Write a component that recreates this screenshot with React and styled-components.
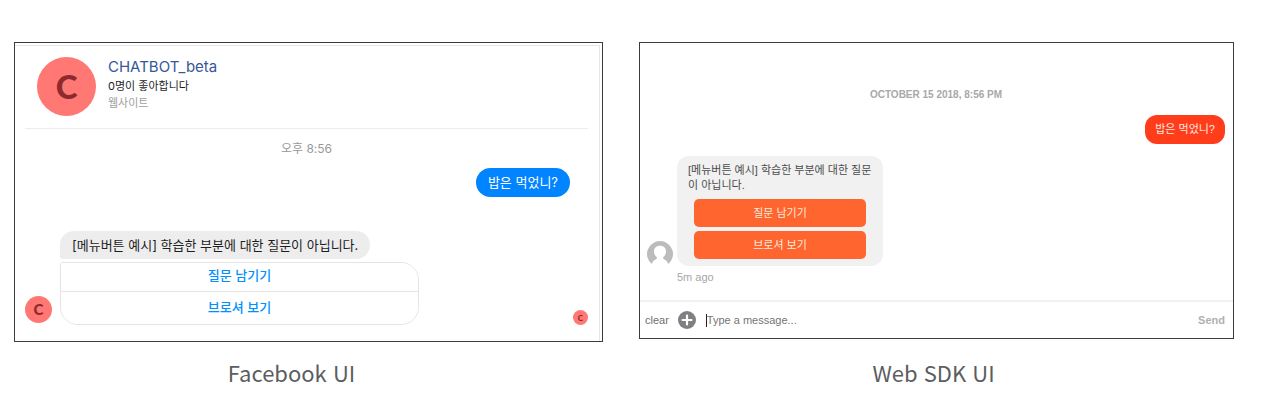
import React from "react";
import styled, { createGlobalStyle } from "styled-components";

const GlobalStyle = createGlobalStyle`
  * { box-sizing: border-box; }
  body {
    margin: 0;
    background: #fff;
    font-family: "Liberation Sans", "Noto Sans CJK KR", sans-serif;
  }
  button, input { font: inherit; }
  button { cursor: pointer; }
`;

const Page = styled.main`
  display: grid;
  grid-template-columns: 589fr 595fr;
  align-items: start;
  gap: 36px;
  padding: 42px 31px 20px 14px;
`;

const Figure = styled.figure`
  display: grid;
  grid-template-rows: minmax(300px, auto) auto;
  align-items: start;
  margin: 0;
`;

const Caption = styled.figcaption`
  padding-top: 15px;
  padding-right: ${(p) => p.$inset || 0}px;
  font-family: "Noto Sans CJK KR", sans-serif;
  font-size: 22px;
  line-height: 30px;
  color: #5c5d5f;
  text-align: center;
`;

/* Messenger panel */

const Messenger = styled.section`
  padding: 2px 2px 0 0;
  border: 1px solid #3c3c3e;
  font-family: "Inter", "Noto Sans CJK KR", sans-serif;
`;

const MessengerBody = styled.div`
  padding: 0 11px 16px 10px;
  border-top: 1px solid #e6e6e6;
  border-right: 1px solid #e6e6e6;
`;

const Profile = styled.header`
  display: flex;
  gap: 12px;
  padding: 11px 12px 12px;
  border-bottom: 1px solid #ececec;
`;

const Avatar = styled.span`
  display: flex;
  flex: none;
  align-items: center;
  justify-content: center;
  width: ${(p) => p.$size}px;
  height: ${(p) => p.$size}px;
  border-radius: 50%;
  background: #ff7874;
  color: #8c2a30;
  font-family: "Lato", sans-serif;
  font-size: ${(p) => p.$text}px;
  font-weight: 900;
  line-height: 1;
`;

const ProfileText = styled.div`
  display: flex;
  flex-direction: column;
`;

const PageName = styled.a`
  font-size: 15px;
  line-height: 20px;
  color: #365899;
  text-decoration: none;
`;

const Likes = styled.span`
  font-size: 11px;
  line-height: 18px;
  color: #1d1d1f;
`;

const Category = styled.span`
  font-size: 11px;
  line-height: 16px;
  color: #a0a0a0;
`;

const Time = styled.time`
  display: block;
  padding: 11px 0;
  font-size: 12px;
  line-height: 17px;
  color: #999;
  text-align: center;
`;

const SentRow = styled.div`
  display: flex;
  justify-content: flex-end;
  padding-right: ${(p) => p.$end}px;
`;

const BlueBubble = styled.p`
  margin: 0;
  padding: 0 12px;
  border-radius: 15px;
  background: #0084ff;
  color: #fff;
  font-size: 13px;
  line-height: 29px;
`;

const Received = styled.div`
  display: flex;
  align-items: flex-end;
  gap: 8px;
  padding-top: 34px;
`;

const Sender = styled.span`
  padding-bottom: 2px;
`;

const Stack = styled.div`
  display: flex;
  flex: 0 1 359px;
  flex-direction: column;
  align-items: flex-start;
  gap: 3px;
`;

const GreyBubble = styled.p`
  margin: 0;
  padding: 0 12px;
  border-radius: 15px 15px 15px 3px;
  background: #ededed;
  color: #1d1d1f;
  font-size: 13px;
  line-height: 28px;
`;

const Choices = styled.div`
  width: 100%;
  overflow: hidden;
  border: 1px solid #e4e4e4;
  border-radius: 3px 18px 18px 18px;
`;

const Choice = styled.button`
  display: block;
  width: 100%;
  padding: 0 0 4px;
  border: 0;
  background: #fff;
  color: #0091ff;
  font-size: 13px;
  font-weight: 500;
  line-height: 24px;

  & + & {
    padding: 2px 0 4px;
    border-top: 1px solid #e4e4e4;
    line-height: 26px;
  }
`;

const Seen = styled.span`
  margin-left: auto;
`;

/* Web widget panel */

const Widget = styled.section`
  border: 1px solid #3c3c3e;
`;

const Conversation = styled.div`
  padding: 44px 8px 15px 7px;
`;

const DateLine = styled.time`
  display: block;
  font-size: 10px;
  font-weight: 700;
  line-height: 16px;
  color: #a8a8a8;
  text-align: center;
`;

const RedBubble = styled.p`
  margin: 12px 0 0;
  padding: 0 10px;
  border-radius: 12px;
  background: #ff3d1a;
  color: #ffe8e0;
  font-size: 11px;
  line-height: 29px;
`;

const Reply = styled.div`
  display: grid;
  grid-template-columns: 26px minmax(0, 206px);
  column-gap: 4px;
  align-items: end;
  padding-top: 12px;
`;

const ReplyCard = styled.div`
  display: flex;
  flex-direction: column;
  gap: 4px;
  padding: 7px 17px;
  border-radius: 12px;
  background: #f1f1f1;
`;

const ReplyText = styled.p`
  margin: 0 -6px 2px;
  font-size: 11px;
  line-height: 15px;
  color: #4c4c4c;
`;

const OrangeButton = styled.button`
  padding: 0;
  border: 0;
  border-radius: 5px;
  background: #ff652f;
  color: #ffe8dc;
  font-size: 11px;
  line-height: 28px;
`;

const Ago = styled.span`
  grid-column: 2;
  padding-top: 4px;
  font-size: 11px;
  line-height: 15px;
  color: #a6a6a6;
`;

const Composer = styled.form`
  display: flex;
  align-items: center;
  height: 38px;
  padding: 0 8px 0 5px;
  border-top: 2px solid #f2f2f2;
  font-size: 11px;
`;

const TextButton = styled.button`
  padding: 0;
  border: 0;
  background: none;
  color: ${(p) => (p.$strong ? "#b0b0b0" : "#6f6f6f")};
  font-weight: ${(p) => (p.$strong ? 700 : 400)};
`;

const IconButton = styled.button`
  display: flex;
  margin: 0 10px 0 9px;
  padding: 0;
  border: 0;
  background: none;
`;

const Caret = styled.span`
  width: 1px;
  height: 13px;
  background: #222;
`;

const MessageInput = styled.input`
  flex: 1;
  min-width: 0;
  padding: 0;
  border: 0;
  outline: 0;
  background: none;

  &::placeholder { color: #757575; opacity: 1; }
`;

function PersonIcon() {
  return (
    <svg width="26" height="25" viewBox="0 0 26 25" aria-hidden="true">
      <path
        d="M13 0A13 13 0 0 0 4.8 23.1C5.3 20.8 6.5 19.4 8.6 18.4C9.6 17.9 10.2 17.1 9.8 16.2C8 14.7 7 12.7 7 10.4C7 6.9 9.6 4.8 13 4.8S19 6.9 19 10.4C19 12.7 18 14.7 16.2 16.2C15.8 17.1 16.4 17.9 17.4 18.4C19.5 19.4 20.7 20.8 21.2 23.1A13 13 0 0 0 13 0Z"
        fill="#bcbcbc"
      />
    </svg>
  );
}

function PlusIcon() {
  return (
    <svg width="18" height="18" viewBox="0 0 18 18" aria-hidden="true">
      <circle cx="9" cy="9" r="9" fill="#7f8084" />
      <path d="M9 4.5V13.5M4.5 9H13.5" stroke="#fff" strokeWidth="2.2" strokeLinecap="round" />
    </svg>
  );
}

export default function App() {
  return (
    <>
      <GlobalStyle />
      <Page lang="ko">
        <Figure>
          <Messenger>
            <MessengerBody>
              <Profile>
                <Avatar $size={59} $text={33}>C</Avatar>
                <ProfileText>
                  <PageName href="#page">CHATBOT_beta</PageName>
                  <Likes>0명이 좋아합니다</Likes>
                  <Category>웹사이트</Category>
                </ProfileText>
              </Profile>
              <Time>오후 8:56</Time>
              <SentRow $end={18}>
                <BlueBubble>밥은 먹었니?</BlueBubble>
              </SentRow>
              <Received>
                <Sender>
                  <Avatar $size={27} $text={15}>C</Avatar>
                </Sender>
                <Stack>
                  <GreyBubble>[메뉴버튼 예시] 학습한 부분에 대한 질문이 아닙니다.</GreyBubble>
                  <Choices>
                    <Choice type="button">질문 남기기</Choice>
                    <Choice type="button">브로셔 보기</Choice>
                  </Choices>
                </Stack>
                <Seen>
                  <Avatar $size={15} $text={8}>C</Avatar>
                </Seen>
              </Received>
            </MessengerBody>
          </Messenger>
          <Caption $inset={34}>Facebook UI</Caption>
        </Figure>

        <Figure>
          <Widget>
            <Conversation>
              <DateLine>OCTOBER 15 2018, 8:56 PM</DateLine>
              <SentRow $end={0}>
                <RedBubble>밥은 먹었니?</RedBubble>
              </SentRow>
              <Reply>
                <PersonIcon />
                <ReplyCard>
                  <ReplyText>[메뉴버튼 예시] 학습한 부분에 대한 질문이 아닙니다.</ReplyText>
                  <OrangeButton type="button">질문 남기기</OrangeButton>
                  <OrangeButton type="button">브로셔 보기</OrangeButton>
                </ReplyCard>
                <Ago>5m ago</Ago>
              </Reply>
            </Conversation>
            <Composer onSubmit={(e) => e.preventDefault()}>
              <TextButton type="button">clear</TextButton>
              <IconButton type="button" aria-label="Attach">
                <PlusIcon />
              </IconButton>
              <Caret />
              <MessageInput aria-label="Message" placeholder="Type a message..." />
              <TextButton type="submit" $strong>Send</TextButton>
            </Composer>
          </Widget>
          <Caption $inset={6}>Web SDK UI</Caption>
        </Figure>
      </Page>
    </>
  );
}
